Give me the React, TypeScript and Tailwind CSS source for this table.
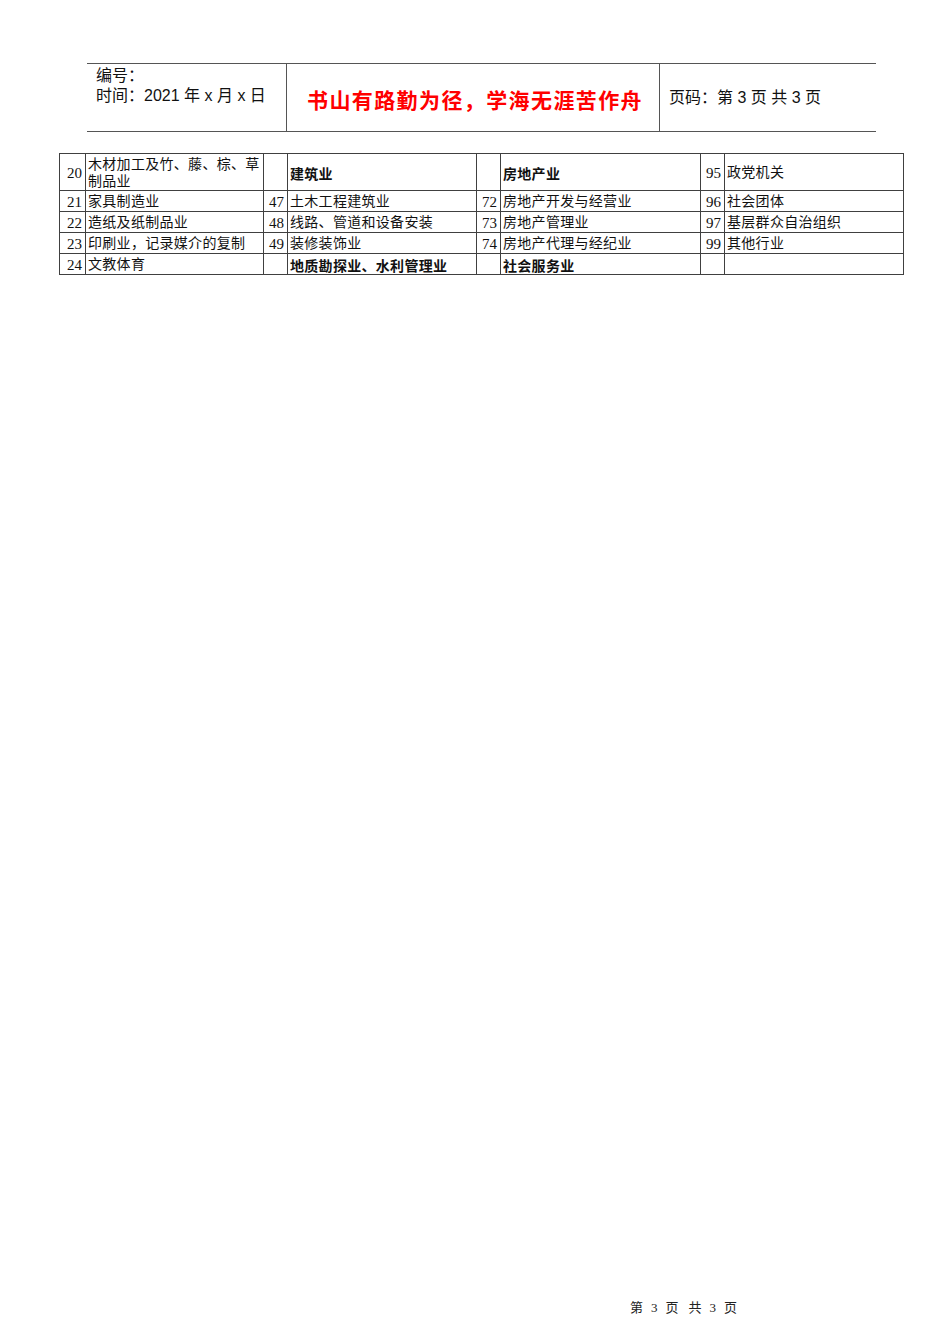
import React from "react";

const SERIF = "font-['Liberation_Serif','Noto_Sans_CJK_SC',serif]";
const SANS = "font-['Liberation_Sans','Noto_Sans_CJK_SC',sans-serif]";

type Cell = { num?: string; text: string; bold?: boolean };

const ROWS: Cell[][] = [
  [
    { num: "20", text: "木材加工及竹、藤、棕、草|制品业" },
    { text: "建筑业", bold: true },
    { text: "房地产业", bold: true },
    { num: "95", text: "政党机关" },
  ],
  [
    { num: "21", text: "家具制造业" },
    { num: "47", text: "土木工程建筑业" },
    { num: "72", text: "房地产开发与经营业" },
    { num: "96", text: "社会团体" },
  ],
  [
    { num: "22", text: "造纸及纸制品业" },
    { num: "48", text: "线路、管道和设备安装" },
    { num: "73", text: "房地产管理业" },
    { num: "97", text: "基层群众自治组织" },
  ],
  [
    { num: "23", text: "印刷业，记录媒介的复制" },
    { num: "49", text: "装修装饰业" },
    { num: "74", text: "房地产代理与经纪业" },
    { num: "99", text: "其他行业" },
  ],
  [
    { num: "24", text: "文教体育" },
    { text: "地质勘探业、水利管理业", bold: true },
    { text: "社会服务业", bold: true },
    { text: "" },
  ],
];

const COLS = [
  ["w-[26px]", "w-[178px]"],
  ["w-[24px]", "w-[189px]"],
  ["w-[24px]", "w-[200px]"],
  ["w-[24px]", "w-[179px]"],
];

function Header() {
  return (
    <div className="ml-[87px] mt-[63px] flex h-[69px] w-[789px] border-y border-[#555] text-[#111]">
      <div className={`w-[200px] shrink-0 border-r border-[#555] pl-[9px] pt-[2px] text-[16px] leading-[20px] ${SANS}`}>
        <div>编号：</div>
        <div>时间：2021 年 x 月 x 日</div>
      </div>
      <div className="flex w-[373px] shrink-0 items-center justify-center border-r border-[#555] pl-[4px] pt-[5px]">
        <span className="font-['Noto_Sans_CJK_SC',sans-serif] text-[21px] font-bold tracking-[1.4px] text-[#ff0000]">
          书山有路勤为径，学海无涯苦作舟
        </span>
      </div>
      <div className={`flex flex-1 items-center pl-[9px] pt-[1px] text-[16px] ${SANS}`}>
        页码：第 3 页 共 3 页
      </div>
    </div>
  );
}

function IndustryTable() {
  return (
    <table className={`ml-[59px] mt-[21px] w-[844px] table-fixed border-collapse text-[14px] text-[#111] ${SERIF}`}>
      <colgroup>
        {COLS.map(([n, w], i) => (
          <React.Fragment key={i}>
            <col className={n} />
            <col className={w} />
          </React.Fragment>
        ))}
      </colgroup>
      <tbody>
        {ROWS.map((row, r) => (
          <tr key={r} className={r === 0 ? "h-[37px]" : "h-[21px]"}>
            {row.map((cell, c) => (
              <React.Fragment key={c}>
                <td className="border border-[#404040] pr-[3px] pt-[1px] text-right align-middle text-[15px] leading-[16px]">
                  {cell.num}
                </td>
                <td
                  className={`border border-[#404040] pl-[2px] pt-[1px] align-middle tracking-[0.3px] ${
                    cell.bold ? "font-['Noto_Sans_CJK_SC',sans-serif] font-bold" : ""
                  } ${r === 0 && !cell.bold ? "leading-[17px]" : "leading-[18px]"}`}
                >
                  {cell.text.split("|").map((line, i) => (
                    <div key={i} className="whitespace-nowrap">
                      {line}
                    </div>
                  ))}
                </td>
              </React.Fragment>
            ))}
          </tr>
        ))}
      </tbody>
    </table>
  );
}

export default function App() {
  return (
    <div className="flex min-h-[1344px] w-[950px] flex-col bg-white">
      <Header />
      <IndustryTable />
      <div className={`ml-[630px] mt-auto flex gap-[8px] pb-[28px] text-[13px] leading-[16px] text-[#222] ${SERIF}`}>
        <span>第</span>
        <span>3</span>
        <span>页</span>
        <span className="ml-[2px]">共</span>
        <span>3</span>
        <span>页</span>
      </div>
    </div>
  );
}
